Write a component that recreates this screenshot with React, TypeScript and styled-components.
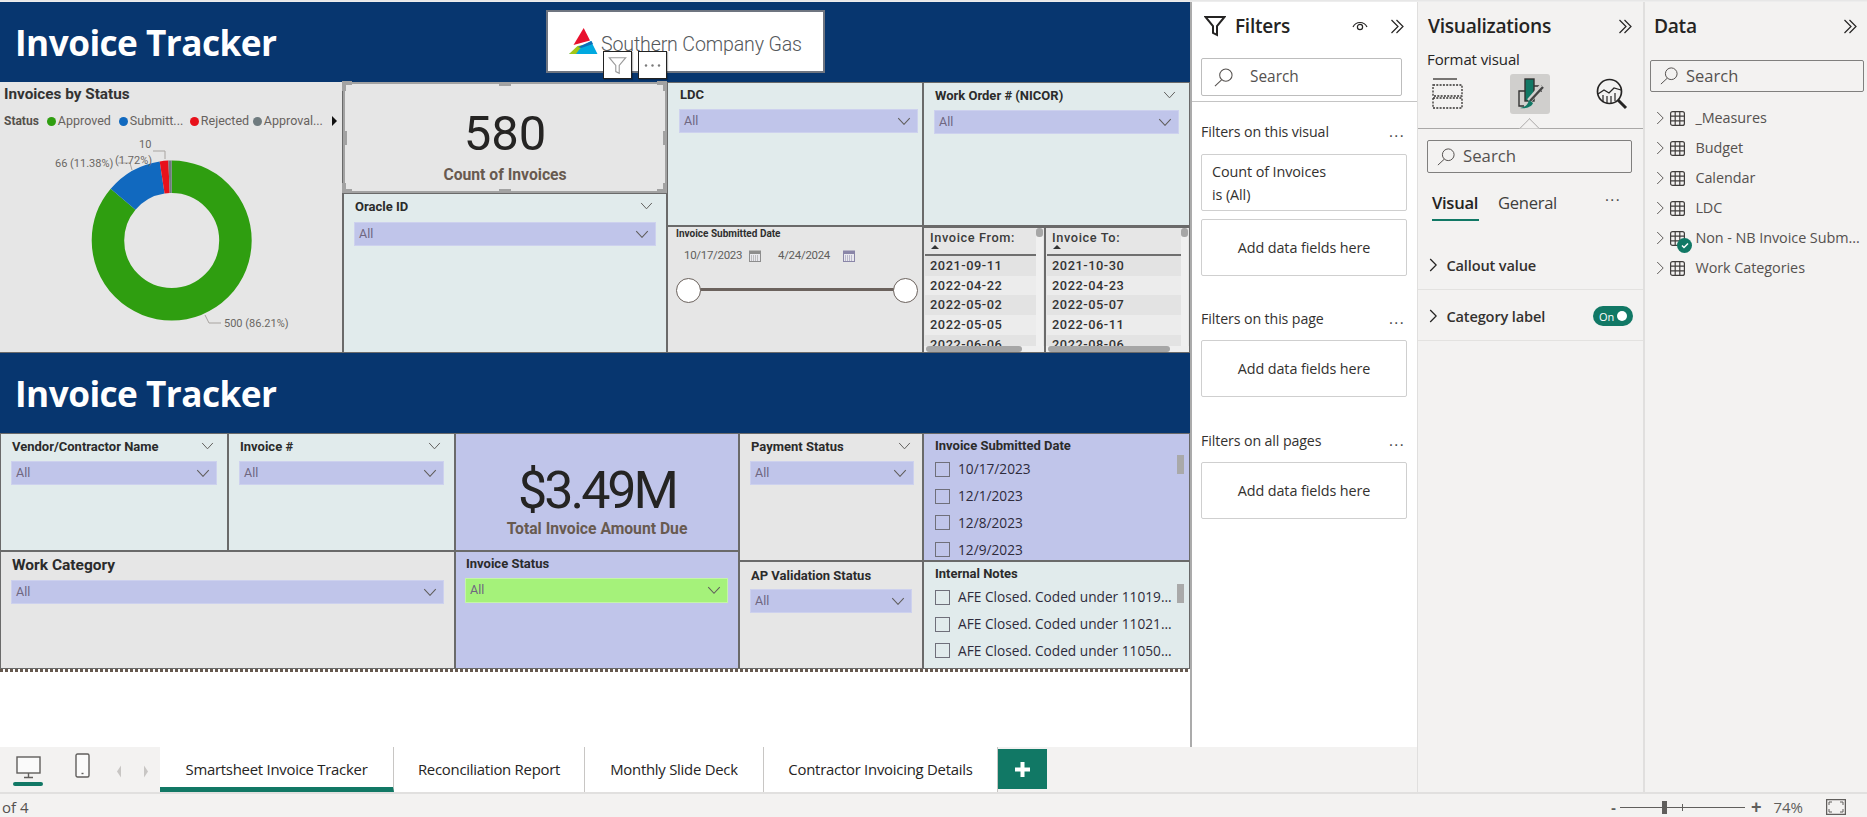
import React from "react";
import styled, { createGlobalStyle } from "styled-components";

const UI = `"Open Sans", "Noto Sans", sans-serif`;
const DIN = `Roboto, "Liberation Sans", sans-serif`;
const NAVY = "#07366f";
const GREY = "#e6e6e6";
const ICE = "#e1ebec";
const LILAC = "#c0c5ea";
const TEAL = "#117865";
const PANE = "#f3f2f1";
const EDGE = "#6a6a6a";

const Global = createGlobalStyle`
  html, body { margin: 0; padding: 0; height: 100%; background: #fff; overflow: hidden; }
  * { box-sizing: border-box; }
  body { font-family: ${UI}; color: #252423; }
`;

const Page = styled.div`
  width: 1867px;
  height: 817px;
  display: flex;
  flex-direction: column;
  overflow: hidden;
`;
const TopShadow = styled.div`
  height: 2px;
  flex: none;
  background: linear-gradient(#e4e4e4, #f0f0f0);
`;
const Workspace = styled.div`
  flex: none;
  height: 790px;
  display: flex;
`;
const LeftArea = styled.div`
  width: 1417px;
  flex: none;
  display: flex;
  flex-direction: column;
`;
const UpperArea = styled.div`
  height: 745px;
  flex: none;
  display: flex;
`;
const Canvas = styled.div`
  width: 1190px;
  flex: none;
  background: #fff;
`;

/* report canvas */
const Banner = styled.div<{ $h: number }>`
  position: relative;
  height: ${(p) => p.$h}px;
  background: ${NAVY};
  padding: 2px 0 0 15px;
  display: flex;
  align-items: center;
`;
const BannerTitle = styled.h1`
  margin: 0;
  color: #fff;
  font: 700 35.2px/1 ${UI};
  letter-spacing: -0.55px;
`;
const Logo = styled.div`
  position: absolute;
  left: 546px;
  top: 8px;
  width: 279px;
  height: 63px;
  background: #fff;
  border: 2px solid #6f7580;
  display: flex;
  align-items: center;
  padding: 0 0 2px 21px;
  gap: 3px;
`;
const LogoText = styled.span`
  margin-top: 8px;
  font: 300 19.6px/1 Roboto, sans-serif;
  color: #55585b;
  letter-spacing: -0.15px;
  white-space: nowrap;
`;
const HeaderBtn = styled.div<{ $left: number }>`
  position: absolute;
  left: ${(p) => p.$left}px;
  top: 49px;
  width: 29px;
  height: 28px;
  background: #fff;
  border: 1px solid #222;
  box-shadow: 1px 1px 1px rgba(0, 0, 0, 0.25);
  display: flex;
  align-items: center;
  justify-content: center;
  color: #8a8a8a;
`;
const ReportRow = styled.div<{ $h: number }>`
  height: ${(p) => p.$h}px;
  display: flex;
`;
const Col = styled.div<{ $w?: number }>`
  display: flex;
  flex-direction: column;
  ${(p) => (p.$w ? `width: ${p.$w}px; flex: none;` : "flex: 1; min-width: 0;")}
`;
const Row = styled.div<{ $h: number }>`
  display: flex;
  height: ${(p) => p.$h}px;
  flex: none;
`;
const Tile = styled.div<{ $bg: string; $w?: number; $h?: number; $pl?: number; $pr?: number; $pt?: number }>`
  position: relative;
  background: ${(p) => p.$bg};
  border: 1px solid ${EDGE};
  padding: ${(p) => p.$pt ?? 7}px ${(p) => p.$pr ?? 10}px 0 ${(p) => p.$pl ?? 10}px;
  ${(p) => (p.$w ? `width: ${p.$w}px; flex: none;` : "flex: 1; min-width: 0;")}
  ${(p) => (p.$h ? `height: ${p.$h}px; flex: none;` : "")}
  overflow: hidden;
`;
const SlicerHead = styled.div<{ $h?: number }>`
  height: ${(p) => p.$h ?? 20}px;
  display: flex;
  align-items: center;
  justify-content: space-between;
  padding: 0 3px 0 1px;
`;
const SlicerTitle = styled.span<{ $size?: number }>`
  font: 700 ${(p) => p.$size ?? 13}px/1 ${DIN};
  color: #2b2b2b;
  white-space: nowrap;
`;
const ListTitle = styled(SlicerTitle)`
  display: block;
  height: 14px;
`;
const Dropdown = styled.div<{ $bg?: string; $h?: number; $mt?: number }>`
  margin-top: ${(p) => p.$mt ?? 5}px;
  height: ${(p) => p.$h ?? 24}px;
  background: ${(p) => p.$bg ?? LILAC};
  border: 1px solid ${(p) => (p.$bg ? "#c5f5a8" : "#cdd1ee")};
  display: flex;
  align-items: center;
  justify-content: space-between;
  padding: 0 6px 0 4px;
  font: 400 12.5px/1 ${DIN};
  color: #6f6780;
`;
const Kpi = styled.div<{ $bg: string; $pad: number }>`
  flex: 1;
  background: ${(p) => p.$bg};
  border: 1px solid ${EDGE};
  display: flex;
  flex-direction: column;
  align-items: center;
  padding-top: ${(p) => p.$pad}px;
`;
const KpiCard = styled(Kpi)`
  flex: none;
  height: 111px;
  position: relative;
  border: 2px solid #a2a2a2;
`;
const KpiValue = styled.div<{ $size: number; $ls?: number }>`
  font: 400 ${(p) => p.$size}px/1 ${DIN};
  letter-spacing: ${(p) => p.$ls ?? 0}px;
  color: #252423;
`;
const KpiLabel = styled.div<{ $mt: number }>`
  margin-top: ${(p) => p.$mt}px;
  font: 700 15.7px/1 ${DIN};
  color: #685a50;
  white-space: nowrap;
`;
const Handle = styled.i<{ $x: string; $y: string; $v?: boolean }>`
  position: absolute;
  left: ${(p) => p.$x};
  top: ${(p) => p.$y};
  width: ${(p) => (p.$v ? 4 : 12)}px;
  height: ${(p) => (p.$v ? 14 : 4)}px;
  margin-left: ${(p) => (p.$v ? -2 : -6)}px;
  margin-top: ${(p) => (p.$v ? -7 : -2)}px;
  background: #a2a2a2;
`;
const Corner = styled.i<{ $x: string; $y: string; $flipX?: boolean; $flipY?: boolean }>`
  position: absolute;
  left: ${(p) => p.$x};
  top: ${(p) => p.$y};
  width: 10px;
  height: 10px;
  margin: -5px 0 0 -5px;
  border-style: solid;
  border-color: #a2a2a2;
  border-width: ${(p) => (p.$flipY ? "0 0 4px" : "4px 0 0")};
  border-left-width: ${(p) => (p.$flipX ? 0 : 4)}px;
  border-right-width: ${(p) => (p.$flipX ? 4 : 0)}px;
`;

/* donut */
const DonutTile = styled.div`
  width: 343px;
  flex: none;
  background: ${GREY};
  border-bottom: 1px solid ${EDGE};
  border-right: 1px solid ${EDGE};
  padding: 2px 0 0 4px;
  height: 271px;
`;
const DonutTitle = styled.div`
  font: 700 15.3px/20px ${DIN};
  color: #333;
  white-space: nowrap;
`;
const Legend = styled.div`
  margin-top: 9px;
  height: 16px;
  display: flex;
  align-items: center;
  font: 400 12.5px/16px ${DIN};
  color: #66625e;
  white-space: nowrap;
`;
const LegendName = styled.b`
  font-weight: 700;
  font-size: 12px;
  color: #55514c;
  margin-right: 8px;
`;
const LegendItem = styled.span<{ $c: string; $w: number }>`
  display: flex;
  align-items: center;
  gap: 2px;
  width: ${(p) => p.$w}px;
  &::before {
    content: "";
    width: 9px;
    height: 9px;
    border-radius: 50%;
    background: ${(p) => p.$c};
  }
`;
const DonutSvg = styled.svg`
  display: block;
  margin: 3px 0 0 -4px;
`;

/* date slicer */
const DateTitle = styled.div`
  font: 700 10px/12px ${DIN};
  color: #2f2f2f;
  white-space: nowrap;
`;
const DateRow = styled.div`
  display: flex;
  margin-top: 8px;
  height: 16px;
  align-items: center;
  padding-left: 8px;
  font: 400 11.5px/1 ${DIN};
  letter-spacing: -0.3px;
  color: #605e5c;
`;
const DateValue = styled.span<{ $w: number }>`
  width: ${(p) => p.$w}px;
  display: flex;
  justify-content: space-between;
  align-items: center;
  padding-right: 17px;
  white-space: nowrap;
`;
const SliderWrap = styled.div`
  margin: 13px 0 0 0;
  width: 242px;
  height: 26px;
  display: flex;
  align-items: center;
  justify-content: space-between;
  position: relative;
  &::before {
    content: "";
    position: absolute;
    left: 12px;
    right: 12px;
    top: 11px;
    height: 3px;
    background: #6b625d;
  }
`;
const Thumb = styled.span`
  position: relative;
  width: 25px;
  height: 25px;
  border-radius: 50%;
  background: #fff;
  border: 1.5px solid #6b625d;
`;

/* table */
const TableTile = styled.div<{ $w?: number }>`
  position: relative;
  background: ${GREY};
  border: 1px solid ${EDGE};
  border-top-width: 2px;
  overflow: hidden;
  padding-left: 1px;
  ${(p) => (p.$w ? `width: ${p.$w}px; flex: none;` : "flex: 1; min-width: 0;")}
`;
const TableHead = styled.div<{ $w: number }>`
  width: ${(p) => p.$w}px;
  height: 23px;
  border-bottom: 2px solid #6f6f6f;
  padding: 3px 0 0 5px;
  font: 500 12.8px/14px ${DIN};
  letter-spacing: 0.6px;
  color: #3c3c3c;
  position: relative;
  box-sizing: content-box;
  white-space: nowrap;
`;
const SortArrow = styled.i`
  display: block;
  margin: 0 0 0 1px;
  width: 0;
  height: 0;
  border: 4px solid transparent;
  border-top-width: 0;
  border-bottom: 4px solid #333;
`;
const Cell = styled.div<{ $alt: boolean; $w: number }>`
  width: ${(p) => p.$w}px;
  height: 19.7px;
  background: ${(p) => (p.$alt ? "#ececec" : "#e3e3e3")};
  padding-left: 5px;
  font: 500 12.8px/19.7px ${DIN};
  letter-spacing: 0.55px;
  color: #333;
`;
const ScrollX = styled.i<{ $w: number }>`
  position: absolute;
  left: 2px;
  bottom: 0;
  width: ${(p) => p.$w}px;
  height: 6px;
  border-radius: 3px;
  background: #a6a6a6;
  z-index: 1;
`;
const ScrollTrackX = styled.i`
  position: absolute;
  left: 0;
  right: 0;
  bottom: 0;
  height: 6px;
  background: #efefef;
`;
const ScrollY = styled.i`
  position: absolute;
  right: 1px;
  top: 0;
  width: 7px;
  bottom: 6px;
  background: #f0f0f0;
  &::before {
    content: "";
    position: absolute;
    left: 0;
    top: 0;
    width: 7px;
    height: 9px;
    border-radius: 3px;
    background: #a6a6a6;
  }
`;

/* list slicer */
const ListTile = styled(Tile)`
  padding: 5px 0 0 11px;
`;
const ListItem = styled.div<{ $h: number }>`
  height: ${(p) => p.$h}px;
  display: flex;
  align-items: center;
  gap: 8px;
  font: 400 13.7px/1 ${UI};
  color: #2e2b3c;
  white-space: nowrap;
`;
const Check = styled.i`
  width: 15px;
  height: 15px;
  flex: none;
  border: 1px solid #6f6f7a;
`;
const Thumbnail = styled.i<{ $top: number }>`
  position: absolute;
  right: 5px;
  top: ${(p) => p.$top}px;
  width: 7px;
  height: 19px;
  background: #a9a9a9;
`;
const Spacer = styled.div<{ $h: number }>`
  height: ${(p) => p.$h}px;
`;
const DottedEdge = styled.div`
  height: 3px;
  background: repeating-linear-gradient(90deg, #66594f 0 3px, #fff 3px 5px);
`;

/* filters pane */
const FiltersPane = styled.aside`
  width: 227px;
  flex: none;
  background: #fff;
  border-left: 2px solid #ababab;
  display: flex;
  flex-direction: column;
`;
const FilterHead = styled.div`
  height: 48px;
  margin-bottom: 8px;
  flex: none;
  padding: 0 12px 0 12px;
  display: flex;
  align-items: center;
`;
const FilterTitle = styled.div`
  margin-left: 9px;
  flex: 1;
  font: 600 19px/1 ${UI};
  letter-spacing: -0.25px;
  color: #252423;
`;
const Tools = styled.div`
  display: flex;
  gap: 22px;
  align-items: center;
`;
const SearchBox = styled.div<{ $w: number; $h: number; $ml: number; $gap: number; $size: number; $mt?: number; $pl?: number }>`
  width: ${(p) => p.$w}px;
  height: ${(p) => p.$h}px;
  margin: ${(p) => p.$mt ?? 0}px 0 0 ${(p) => p.$ml}px;
  flex: none;
  border: 1px solid ${(p) => (p.$h > 35 ? "#bdbdbd" : "#807f7e")};
  border-radius: 2px;
  display: flex;
  align-items: center;
  padding-left: ${(p) => p.$pl ?? 12}px;
  gap: ${(p) => p.$gap}px;
  font: 400 ${(p) => p.$size}px/1 ${UI};
  color: #55514f;
`;
const Rule = styled.div<{ $mt: number }>`
  margin-top: ${(p) => p.$mt}px;
  height: 1px;
  flex: none;
  background: #c4c4c4;
`;
const SectionHead = styled.div<{ $mt: number }>`
  margin: ${(p) => p.$mt}px 12px 0 9px;
  height: 20px;
  flex: none;
  display: flex;
  justify-content: space-between;
  align-items: center;
  font: 400 14.2px/20px ${UI};
  letter-spacing: -0.1px;
  color: #33312f;
`;
const Dots = styled.span<{ $mt?: number }>`
  font: 400 15px/1 ${UI};
  letter-spacing: 1.4px;
  color: #444;
  margin-top: ${(p) => p.$mt ?? -2}px;
`;
const DropBox = styled.div<{ $mt: number; $h?: number; $left?: boolean }>`
  margin: ${(p) => p.$mt}px 10px 0 9px;
  height: ${(p) => p.$h ?? 57}px;
  flex: none;
  border: 1px solid #cfcfcf;
  border-radius: 2px;
  display: flex;
  flex-direction: column;
  justify-content: center;
  align-items: ${(p) => (p.$left ? "flex-start" : "center")};
  padding-left: ${(p) => (p.$left ? 10 : 0)}px;
  font: 400 14.4px/23px ${UI};
  letter-spacing: -0.1px;
  color: #33312f;
`;

/* viz pane */
const VizPane = styled.aside`
  width: 226px;
  flex: none;
  height: 100%;
  background: ${PANE};
  border-left: 1px solid #e0dfde;
  display: flex;
  flex-direction: column;
`;
const DataPane = styled(VizPane)`
  width: 224px;
  border-left: 2px solid #e0dfde;
`;
const PaneHead = styled.div<{ $pl: number; $pr: number }>`
  height: 48px;
  flex: none;
  padding: 0 ${(p) => p.$pr}px 0 ${(p) => p.$pl}px;
  display: flex;
  align-items: center;
  justify-content: space-between;
  font: 600 19.2px/1 ${UI};
  letter-spacing: -0.3px;
  color: #252423;
`;
const SubHead = styled.div`
  margin: 0 0 0 9px;
  font: 400 15px/18px ${UI};
  letter-spacing: -0.1px;
  color: #252423;
`;
const IconRow = styled.div`
  height: 41px;
  margin-top: 5px;
  flex: none;
  padding-left: 14px;
  display: flex;
  align-items: center;
`;
const IconCell = styled.div<{ $on?: boolean; $w: number; $ml?: number }>`
  width: ${(p) => p.$w}px;
  height: 40px;
  margin-left: ${(p) => p.$ml ?? 0}px;
  flex: none;
  display: flex;
  align-items: center;
  justify-content: center;
  border-radius: 3px;
  background: ${(p) => (p.$on ? "#d0cfcd" : "transparent")};
`;
const Notched = styled.div`
  margin-top: 14px;
  height: 1px;
  flex: none;
  background: #a9a8a7;
  position: relative;
  &::after {
    content: "";
    position: absolute;
    left: 104px;
    top: -7px;
    width: 14px;
    height: 14px;
    transform: rotate(45deg);
    background: ${PANE};
    border-top: 1px solid #a9a8a7;
    border-left: 1px solid #a9a8a7;
    clip-path: polygon(0 0, 100% 0, 0 100%);
  }
`;
const VizTabs = styled.div`
  margin: 13px 10px 0 14px;
  height: 36px;
  flex: none;
  display: flex;
  align-items: flex-start;
  font: 400 16.6px/33px ${UI};
  letter-spacing: -0.3px;
  color: #403e3c;
`;
const VizTab = styled.span<{ $on?: boolean; $w: number }>`
  width: ${(p) => p.$w}px;
  flex: none;
  height: 36px;
  color: ${(p) => (p.$on ? "#252423" : "#403e3c")};
  font-weight: ${(p) => (p.$on ? 600 : 400)};
`;
const ActiveBar = styled.div`
  width: 47px;
  height: 2px;
  background: ${TEAL};
`;
const AccordionRow = styled.div<{ $h: number; $pt: number }>`
  height: ${(p) => p.$h}px;
  flex: none;
  padding: ${(p) => p.$pt}px 10px 0 11px;
  border-bottom: 1px solid #e3e2e0;
  display: flex;
  align-items: flex-start;
  gap: 9px;
  font: 600 14.6px/20px ${UI};
  letter-spacing: -0.15px;
  color: #33312f;
`;
const ChevBox = styled.span`
  height: 20px;
  display: flex;
  align-items: center;
`;
const Toggle = styled.span`
  margin-left: auto;
  width: 40px;
  height: 20px;
  border-radius: 10px;
  background: ${TEAL};
  display: flex;
  align-items: center;
  justify-content: space-between;
  padding: 0 6px;
  font: 400 11px/1 ${UI};
  color: #fff;
  &::after {
    content: "";
    width: 10px;
    height: 10px;
    border-radius: 50%;
    background: #fff;
  }
`;
const FieldList = styled.div`
  margin-top: 11px;
  padding-left: 11px;
  display: flex;
  flex-direction: column;
`;
const FieldRow = styled.div`
  height: 30px;
  display: flex;
  align-items: center;
  font: 400 14.4px/1 ${UI};
  letter-spacing: -0.05px;
  color: #55514f;
  white-space: nowrap;
`;
const TableIconWrap = styled.span`
  position: relative;
  margin: 0 10px 0 6px;
  width: 15px;
  height: 15px;
  flex: none;
  display: block;
`;
const Badge = styled.i`
  position: absolute;
  left: 7px;
  top: 7px;
  width: 15px;
  height: 15px;
  border-radius: 50%;
  background: ${TEAL};
  display: flex;
  align-items: center;
  justify-content: center;
`;

/* bottom */
const TabBar = styled.div`
  height: 45px;
  flex: none;
  background: ${PANE};
  display: flex;
`;
const ViewBtns = styled.div`
  width: 160px;
  flex: none;
  display: flex;
  align-items: flex-start;
  padding: 6px 0 0 13px;
`;
const DeskBtn = styled.div`
  width: 30px;
  height: 33px;
  display: flex;
  flex-direction: column;
  align-items: center;
  padding-top: 3px;
  justify-content: space-between;
  &::after {
    content: "";
    width: 30px;
    height: 4px;
    border-radius: 2px;
    background: ${TEAL};
  }
`;
const PhoneBtn = styled.div`
  margin-left: 32px;
`;
const Pager = styled.div`
  display: flex;
  gap: 23px;
  margin: 12px 0 0 27px;
`;
const Tab = styled.div<{ $w: number; $on?: boolean }>`
  width: ${(p) => p.$w}px;
  flex: none;
  background: #fff;
  border-right: 1px solid #c8c6c4;
  border-bottom: ${(p) => (p.$on ? `5px solid ${TEAL}` : "none")};
  padding-top: ${(p) => (p.$on ? 5 : 0)}px;
  height: 45px;
  display: flex;
  align-items: center;
  justify-content: center;
  font: 400 14.9px/1 ${UI};
  letter-spacing: -0.25px;
  color: #252423;
  white-space: nowrap;
`;
const AddTab = styled.div`
  width: 49px;
  height: 40px;
  margin-top: 2px;
  background: ${TEAL};
  display: flex;
  align-items: center;
  justify-content: center;
`;
const StatusBar = styled.div`
  flex: 1;
  background: ${PANE};
  border-top: 2px solid #e1e0df;
  display: flex;
  align-items: center;
  padding: 3px 0 0 2px;
  font: 400 15px/1 ${UI};
  color: #55514f;
`;
const Zoomer = styled.div`
  margin-left: auto;
  display: flex;
  align-items: center;
  padding-right: 21px;
`;
const ZoomSign = styled.span<{ $size: number }>`
  font: 700 ${(p) => p.$size}px/1 "Liberation Sans", sans-serif;
  color: #605e5c;
`;
const Track = styled.span`
  position: relative;
  width: 125px;
  height: 1px;
  margin: 0 6px 0 4px;
  background: #605e5c;
  &::before {
    content: "";
    position: absolute;
    left: 42px;
    top: -6px;
    width: 5px;
    height: 13px;
    background: #605e5c;
  }
  &::after {
    content: "";
    position: absolute;
    left: 62px;
    top: -3px;
    width: 1px;
    height: 7px;
    background: #605e5c;
  }
`;
const ZoomPct = styled.span`
  margin: 0 23px 0 12px;
  font: 400 15px/1 ${UI};
  color: #605e5c;
`;

/* icons */
const Chev = ({ s = 13, c = "#605e5c" }: { s?: number; c?: string }) => (
  <svg width={s} height={s * 0.6} viewBox="0 0 13 8" fill="none" stroke={c} strokeWidth="1">
    <path d="M1 1l5.5 6L12 1" />
  </svg>
);
const ChevRight = ({ h = 14, c = "#605e5c", w = 1 }: { h?: number; c?: string; w?: number }) => (
  <svg width={h * 0.6} height={h} viewBox="0 0 8 14" fill="none" stroke={c} strokeWidth={w}>
    <path d="M1 1l6 6-6 6" />
  </svg>
);
const DoubleChev = () => (
  <svg width="15" height="15" viewBox="0 0 15 15" fill="none" stroke="#252423" strokeWidth="1.2">
    <path d="M1.5 1l6.5 6.5L1.5 14M6.5 1l6.5 6.5L6.5 14" />
  </svg>
);
const Funnel = ({ s = 22, c = "#252423", w = 2 }: { s?: number; c?: string; w?: number }) => (
  <svg width={s} height={s} viewBox="0 0 22 22" fill="none" stroke={c} strokeWidth={w}>
    <path d="M1.5 2h19L13 11v9l-4-2v-7z" />
  </svg>
);
const Eye = () => (
  <svg width="16" height="12" viewBox="0 0 16 12" fill="none" stroke="#252423" strokeWidth="1.2">
    <path d="M1 7c3-6 11-6 14 0" />
    <circle cx="8" cy="7" r="2.6" />
  </svg>
);
const Magnifier = ({ s = 19 }: { s?: number }) => (
  <svg width={s} height={s} viewBox="0 0 20 20" fill="none" stroke="#55514f" strokeWidth="1.1">
    <circle cx="12.5" cy="7.5" r="6.5" />
    <path d="M8 12.5L1 19" />
  </svg>
);
const TableGlyph = () => (
  <svg width="15" height="15" viewBox="0 0 15 15" fill="none" stroke="#403e3c" strokeWidth="1.2">
    <rect x="0.6" y="0.6" width="13.8" height="13.8" rx="2" />
    <path d="M5.2 0.6v13.8M9.8 0.6v13.8M0.6 5.2h13.8M0.6 9.8h13.8" />
  </svg>
);
const CalIcon = ({ c }: { c: string }) => (
  <svg width="12" height="12" viewBox="0 0 12 12">
    <rect x="0.5" y="1" width="11" height="10.5" fill="#e9e9ee" stroke={c} />
    <rect x="0.5" y="1" width="11" height="3" fill={c} />
    <path d="M2 6h8M2 8h8M2 10h8" stroke={c} strokeDasharray="1 1" />
  </svg>
);
const FieldsIcon = () => (
  <svg width="32" height="32" viewBox="0 0 32 32" fill="none" stroke="#33312f" strokeWidth="1.3">
    <path d="M1 1h24" />
    <path strokeDasharray="2 1.3" d="M1 7h29v11H1zM1 20h29v10H1z" />
  </svg>
);
const FormatIcon = () => (
  <svg width="30" height="32" viewBox="0 0 30 32" fill="none">
    <rect x="10" y="1" width="9" height="22" fill={TEAL} stroke="#333" strokeWidth="1.4" />
    <path d="M10 13H4v15h5M19 8h7v6" stroke="#333" strokeWidth="1.4" />
    <path d="M27 8L14 23" stroke="#d0cfcd" strokeWidth="5" />
    <path d="M28 9L15 23" stroke="#444" strokeWidth="2.4" />
    <path d="M14 22c-1 5-4 7-9 8 5 1 12-1 13-5z" fill={TEAL} />
  </svg>
);
const AnalyticsIcon = () => (
  <svg width="32" height="32" viewBox="0 0 32 32" fill="none" stroke="#252423" strokeWidth="1.7">
    <circle cx="13.5" cy="13.5" r="12" />
    <path d="M2 16l6-4 5 3 5-5 7 2" strokeWidth="1.3" />
    <path d="M7 17v7M11 18v7M15 18v7M19 15v8" strokeWidth="1.2" />
    <path d="M22 22l8 8" strokeWidth="3" />
  </svg>
);
const Monitor = () => (
  <svg width="25" height="23" viewBox="0 0 25 23" fill="none" stroke="#605e5c" strokeWidth="1.4">
    <rect x="1" y="1" width="23" height="16" fill="#fafafa" />
    <path d="M12.5 17v4M8 21.5h9" />
  </svg>
);
const Phone = () => (
  <svg width="15" height="25" viewBox="0 0 15 25" fill="none" stroke="#605e5c" strokeWidth="1.4">
    <rect x="1" y="1" width="13" height="23" rx="1.5" fill="#fafafa" />
    <path d="M6.5 20.5h2" />
  </svg>
);
const Tri = ({ left }: { left?: boolean }) => (
  <svg width="4" height="13" viewBox="0 0 6 18" fill="#c8c6c4">
    <path d={left ? "M6 0v18L0 9z" : "M0 0v18L6 9z"} />
  </svg>
);
const LogoMark = () => (
  <svg width="29" height="26" viewBox="0 0 29 26">
    <path d="M14.7 0L21 12.5 4.5 17z" fill="#e8112d" />
    <path d="M22 13l6.5 13H0l8-4.500z" fill="#00a9e0" />
    <path d="M0 26l8.500-8 6-1-5 5.500L7 26z" fill="#a2c617" />
    <path d="M9 19l13.500-6 1.500 3-12 4z" fill="#0d6fb8" />
  </svg>
);

const Slicer = ({ title, size, chevron, pl, pr, pt, w, h, bg, ddBg, ddH, head, mt }: {
  title: string; size?: number; chevron?: boolean; pl?: number; pr?: number; pt?: number;
  w?: number; h?: number; bg: string; ddBg?: string; ddH?: number; head?: number; mt?: number;
}) => (
  <Tile $bg={bg} $w={w} $h={h} $pl={pl} $pr={pr} $pt={pt}>
    <SlicerHead $h={head}>
      <SlicerTitle $size={size}>{title}</SlicerTitle>
      {chevron && <Chev />}
    </SlicerHead>
    <Dropdown $bg={ddBg} $h={ddH} $mt={mt}>
      <span>All</span>
      <Chev s={14} />
    </Dropdown>
  </Tile>
);

const DateTable = ({ w, title, rows, inner, sx }: { w?: number; title: string; rows: string[]; inner: number; sx: number }) => (
  <TableTile $w={w}>
    <TableHead $w={inner - 5}>
      {title}
      <SortArrow />
    </TableHead>
    {rows.map((r, i) => (
      <Cell key={r} $alt={i % 2 === 1} $w={inner}>{r}</Cell>
    ))}
    <ScrollY />
    <ScrollTrackX />
    <ScrollX $w={sx} />
  </TableTile>
);

const Items = ({ list }: { list: string[] }) => (
  <>
    {list.map((t) => (
      <ListItem key={t} $h={26.7}>
        <Check />
        {t}
      </ListItem>
    ))}
  </>
);

const fields = ["_Measures", "Budget", "Calendar", "LDC", "Non - NB Invoice Subm...", "Work Categories"];

export default function App() {
  return (
    <Page>
      <Global />
      <TopShadow />
      <Workspace>
        <LeftArea>
          <UpperArea>
            <Canvas>
              <Banner $h={80}>
                <BannerTitle>Invoice Tracker</BannerTitle>
                <Logo>
                  <LogoMark />
                  <LogoText>Southern Company Gas</LogoText>
                </Logo>
                <HeaderBtn $left={603}><Funnel s={19} c="#9a9a9a" w={1.3} /></HeaderBtn>
                <HeaderBtn $left={638}>
                  <svg width="17" height="3" viewBox="0 0 17 3" fill="#7a7a7a">
                    <circle cx="2" cy="1.5" r="1.2" /><circle cx="8.5" cy="1.5" r="1.2" /><circle cx="15" cy="1.5" r="1.2" />
                  </svg>
                </HeaderBtn>
              </Banner>
              <ReportRow $h={271}>
                <DonutTile>
                  <DonutTitle>Invoices by Status</DonutTitle>
                  <Legend>
                    <LegendName>Status</LegendName>
                    <LegendItem $c="#2f9e10" $w={72}>Approved</LegendItem>
                    <LegendItem $c="#1169bf" $w={71}>Submitt...</LegendItem>
                    <LegendItem $c="#e8111b" $w={63}>Rejected</LegendItem>
                    <LegendItem $c="#6f7b7f" $w={79}>Approval...</LegendItem>
                    <svg width="5" height="10" viewBox="0 0 6 12" fill="#111"><path d="M0 0l6 6-6 6z" /></svg>
                  </Legend>
                  <DonutSvg width="343" height="219" viewBox="0 132 343 219">
                    <g transform="rotate(-90 171.7 240.5)" fill="none" strokeWidth="32.5">
                      <circle cx="171.7" cy="240.5" r="63.75" pathLength={580} stroke="#2f9e10" strokeDasharray="500 580" />
                      <circle cx="171.7" cy="240.5" r="63.75" pathLength={580} stroke="#1169bf" strokeDasharray="66 580" strokeDashoffset={-500} />
                      <circle cx="171.7" cy="240.5" r="63.75" pathLength={580} stroke="#e8111b" strokeDasharray="10 580" strokeDashoffset={-566} />
                      <circle cx="171.7" cy="240.5" r="63.75" pathLength={580} stroke="#6f7b7f" strokeDasharray="4 580" strokeDashoffset={-576} />
                    </g>
                    <g fill="none" stroke="#a8a4a0" strokeWidth="1">
                      <path d="M205 315l4 8h12M118 163h12l2 7M153 151h12v8" />
                    </g>
                    <g fontFamily={DIN} fontSize="11" fill="#6a6663">
                      <text x="224" y="327">500 (86.21%)</text>
                      <text x="55" y="167">66 (11.38%)</text>
                      <text x="139" y="148">10</text>
                      <text x="115" y="164">(1.72%)</text>
                    </g>
                  </DonutSvg>
                </DonutTile>
                <Col $w={324}>
                  <KpiCard $bg={GREY} $pad={25}>
                    <KpiValue $size={49}>580</KpiValue>
                    <KpiLabel $mt={9}>Count of Invoices</KpiLabel>
                    <Corner $x="2px" $y="2px" />
                    <Corner $x="calc(100% - 3px)" $y="2px" $flipX />
                    <Corner $x="2px" $y="calc(100% - 3px)" $flipY />
                    <Corner $x="calc(100% - 3px)" $y="calc(100% - 3px)" $flipX $flipY />
                    <Handle $x="50%" $y="0px" />
                    <Handle $x="50%" $y="100%" />
                    <Handle $x="0px" $y="50%" $v />
                    <Handle $x="100%" $y="50%" $v />
                  </KpiCard>
                  <Slicer title="Oracle ID" chevron bg={ICE} h={160} w={324} pt={2} mt={6} pl={10} pr={10} />
                </Col>
                <Col>
                  <Row $h={144}>
                    <Slicer title="LDC" bg={ICE} w={256} pl={11} pr={4} pt={1} />
                    <Slicer title="Work Order # (NICOR)" chevron bg={ICE} pl={10} pr={10} pt={2} />
                  </Row>
                  <Row $h={127}>
                    <Tile $bg={GREY} $w={256} $pl={8} $pr={4} $pt={1}>
                      <DateTitle>Invoice Submitted Date</DateTitle>
                      <DateRow>
                        <DateValue $w={94}>10/17/2023<CalIcon c="#8d8d8d" /></DateValue>
                        <DateValue $w={94}>4/24/2024<CalIcon c="#8a86a8" /></DateValue>
                      </DateRow>
                      <SliderWrap><Thumb /><Thumb /></SliderWrap>
                    </Tile>
                    <DateTable w={122} title="Invoice From:" inner={113} sx={96} rows={["2021-09-11", "2022-04-22", "2022-05-02", "2022-05-05", "2022-06-06"]} />
                    <DateTable title="Invoice To:" inner={135} sx={122} rows={["2021-10-30", "2022-04-23", "2022-05-07", "2022-06-11", "2022-08-06"]} />
                  </Row>
                </Col>
              </ReportRow>
              <Banner $h={80}>
                <BannerTitle>Invoice Tracker</BannerTitle>
              </Banner>
              <ReportRow $h={236}>
                <Col $w={455}>
                  <Row $h={118}>
                    <Slicer title="Vendor/Contractor Name" chevron bg={ICE} w={228} pl={10} pr={10} pt={2} />
                    <Slicer title="Invoice #" chevron bg={ICE} pl={10} pr={10} pt={2} />
                  </Row>
                  <Slicer title="Work Category" size={15.5} bg={GREY} h={118} w={455} pl={10} pr={10} pt={1} head={25} mt={2} />
                </Col>
                <Col $w={284}>
                  <Row $h={118}>
                    <Kpi $bg={LILAC} $pad={31}>
                      <KpiValue $size={52} $ls={-3}>$3.49M</KpiValue>
                      <KpiLabel $mt={4}>Total Invoice Amount Due</KpiLabel>
                    </Kpi>
                  </Row>
                  <Slicer title="Invoice Status" bg={LILAC} ddBg="#a5f27a" ddH={25} h={118} w={284} pl={9} pr={10} pt={1} />
                </Col>
                <Col $w={184}>
                  <Slicer title="Payment Status" chevron bg={GREY} h={128} w={184} pl={10} pr={8} pt={2} />
                  <Slicer title="AP Validation Status" bg={GREY} h={108} w={184} pl={10} pr={10} pt={3} mt={4} />
                </Col>
                <Col>
                  <ListTile $bg={LILAC} $h={128}>
                    <ListTitle>Invoice Submitted Date</ListTitle>
                    <Spacer $h={3} />
                    <Items list={["10/17/2023", "12/1/2023", "12/8/2023", "12/9/2023"]} />
                    <Thumbnail $top={21} />
                  </ListTile>
                  <ListTile $bg={ICE} $h={108}>
                    <ListTitle>Internal Notes</ListTitle>
                    <Spacer $h={3} />
                    <Items list={["AFE Closed. Coded under 11019...", "AFE Closed. Coded under 11021...", "AFE Closed. Coded under 11050..."]} />
                    <Thumbnail $top={22} />
                  </ListTile>
                </Col>
              </ReportRow>
              <DottedEdge />
            </Canvas>
            <FiltersPane>
              <FilterHead>
                <Funnel />
                <FilterTitle>Filters</FilterTitle>
                <Tools><Eye /><DoubleChev /></Tools>
              </FilterHead>
              <SearchBox $w={201} $h={38} $ml={9} $gap={17} $size={15.4}>
                <Magnifier />Search
              </SearchBox>
              <Rule $mt={5} />
              <SectionHead $mt={20}>Filters on this visual<Dots>...</Dots></SectionHead>
              <DropBox $mt={12} $left>
                <span>Count of Invoices</span>
                <span>is (All)</span>
              </DropBox>
              <DropBox $mt={8}>Add data fields here</DropBox>
              <SectionHead $mt={33}>Filters on this page<Dots>...</Dots></SectionHead>
              <DropBox $mt={11}>Add data fields here</DropBox>
              <SectionHead $mt={34}>Filters on all pages<Dots>...</Dots></SectionHead>
              <DropBox $mt={11}>Add data fields here</DropBox>
            </FiltersPane>
          </UpperArea>
          <TabBar>
            <ViewBtns>
              <DeskBtn><Monitor /></DeskBtn>
              <PhoneBtn><Phone /></PhoneBtn>
              <Pager><Tri left /><Tri /></Pager>
            </ViewBtns>
            <Tab $w={234} $on>Smartsheet Invoice Tracker</Tab>
            <Tab $w={191}>Reconciliation Report</Tab>
            <Tab $w={179}>Monthly Slide Deck</Tab>
            <Tab $w={234}>Contractor Invoicing Details</Tab>
            <AddTab>
              <svg width="15" height="15" viewBox="0 0 15 15" fill="#fff"><path d="M5.500 0h4v5.500H15v4H9.500V15h-4V9.500H0v-4h5.500z" /></svg>
            </AddTab>
          </TabBar>
        </LeftArea>
        <VizPane>
          <PaneHead $pl={10} $pr={10}>Visualizations<DoubleChev /></PaneHead>
          <SubHead>Format visual</SubHead>
          <IconRow>
            <IconCell $w={32}><FieldsIcon /></IconCell>
            <IconCell $w={40} $on $ml={46}><FormatIcon /></IconCell>
            <IconCell $w={32} $ml={46}><AnalyticsIcon /></IconCell>
          </IconRow>
          <Notched />
          <SearchBox $w={205} $h={33} $ml={9} $mt={11} $pl={9} $gap={8} $size={16.8}>
            <Magnifier s={18} />Search
          </SearchBox>
          <VizTabs>
            <VizTab $on $w={66}>Visual<ActiveBar /></VizTab>
            <VizTab $w={107}>General</VizTab>
            <Dots $mt={2}>...</Dots>
          </VizTabs>
          <AccordionRow $h={68} $pt={33}><ChevBox><ChevRight c="#252423" w={1.3} /></ChevBox>Callout value</AccordionRow>
          <AccordionRow $h={51} $pt={16}>
            <ChevBox><ChevRight c="#252423" w={1.3} /></ChevBox>Category label<Toggle>On</Toggle>
          </AccordionRow>
        </VizPane>
        <DataPane>
          <PaneHead $pl={9} $pr={9}>Data<DoubleChev /></PaneHead>
          <SearchBox $w={214} $h={32} $ml={5} $mt={10} $pl={9} $gap={8} $size={16.5}>
            <Magnifier s={18} />Search
          </SearchBox>
          <FieldList>
            {fields.map((f) => (
              <FieldRow key={f}>
                <ChevRight />
                <TableIconWrap>
                  <TableGlyph />
                  {f.startsWith("Non") && (
                    <Badge>
                      <svg width="8" height="7" viewBox="0 0 8 7" fill="none" stroke="#fff" strokeWidth="1.5"><path d="M1 3.500l2 2 4-4" /></svg>
                    </Badge>
                  )}
                </TableIconWrap>
                {f}
              </FieldRow>
            ))}
          </FieldList>
        </DataPane>
      </Workspace>
      <StatusBar>
        of 4
        <Zoomer>
          <ZoomSign $size={15}>-</ZoomSign>
          <Track />
          <ZoomSign $size={18}>+</ZoomSign>
          <ZoomPct>74%</ZoomPct>
          <svg width="20" height="16" viewBox="0 0 20 16" fill="none" stroke="#605e5c">
            <rect x="0.5" y="0.5" width="19" height="15" strokeWidth="1.5" />
            <path d="M3 6V3h3M14 3h3v3M3 10v3h3M14 13h3v-3" />
          </svg>
        </Zoomer>
      </StatusBar>
    </Page>
  );
}
